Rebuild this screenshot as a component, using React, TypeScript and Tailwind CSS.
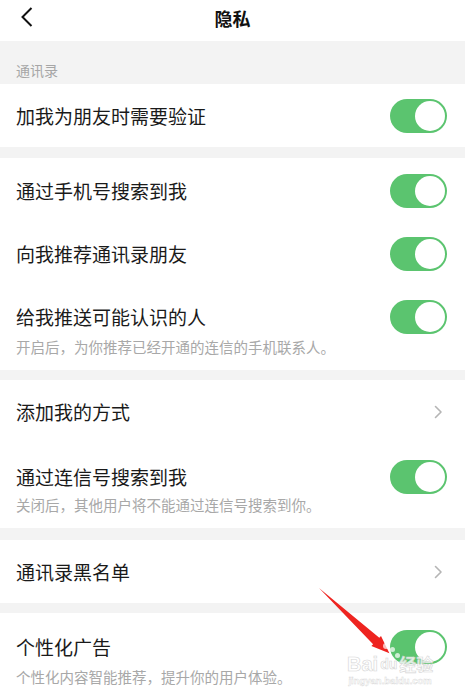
import React from "react";

const FONT = '"Noto Sans CJK SC", "Noto Sans", sans-serif';

function Toggle() {
  return (
    <div className="flex h-[34px] w-[57px] shrink-0 items-center justify-end rounded-full bg-[#5bc46f] p-[2px]">
      <div className="h-[30px] w-[30px] rounded-full bg-white" />
    </div>
  );
}

function Chevron() {
  return (
    <svg width="9" height="14" viewBox="0 0 9 14" className="mr-[4px] shrink-0">
      <polyline points="1.5,1.5 7,7 1.5,12.5" fill="none" stroke="#b5b5b5" strokeWidth="1.6" strokeLinecap="round" strokeLinejoin="round" />
    </svg>
  );
}

function Row({ title, h, right }: { title: string; h: string; right: React.ReactNode }) {
  return (
    <div className={`flex ${h} items-center justify-between bg-white pl-4 pr-[18px]`}>
      <span className="text-[19px] leading-[26px] text-[#1a1a1a]">{title}</span>
      {right}
    </div>
  );
}

function SubRow({ title, sub, pt, pb, mt }: { title: string; sub: string; pt: string; pb: string; mt: string }) {
  return (
    <div className={`flex flex-col bg-white pl-4 pr-[18px] ${pt} ${pb}`}>
      <div className="flex h-[26px] items-center justify-between">
        <span className="text-[19px] leading-[26px] text-[#1a1a1a]">{title}</span>
        <Toggle />
      </div>
      <span className={`text-[14.5px] leading-[20px] text-[#a8a8a8] ${mt}`}>{sub}</span>
    </div>
  );
}

export default function App() {
  return (
    <div className="relative h-[700px] w-[465px] overflow-hidden bg-[#f3f3f3]" style={{ fontFamily: FONT }}>
      {/* header */}
      <div className="h-[41px] bg-white">
        <div className="relative flex h-[35px] items-center justify-center">
          <svg width="12" height="20" viewBox="0 0 12 20" className="absolute left-[21px] top-[7px]">
            <polyline points="10.5,1 1.5,10 10.5,19" fill="none" stroke="#111" strokeWidth="2" strokeLinejoin="miter" />
          </svg>
          <span className="text-[18px] font-bold leading-[24px] text-[#111]">隐私</span>
        </div>
      </div>

      {/* section label */}
      <div className="h-[43px] pl-4 pt-[16px]">
        <span className="text-[14px] leading-[20px] text-[#a6a6a6]">通讯录</span>
      </div>

      <Row title="加我为朋友时需要验证" h="h-[63px]" right={<Toggle />} />

      <div className="h-[11px]" />

      <Row title="通过手机号搜索到我" h="h-[66px]" right={<Toggle />} />
      <Row title="向我推荐通讯录朋友" h="h-[60px]" right={<Toggle />} />
      <SubRow
        title="给我推送可能认识的人"
        sub="开启后，为你推荐已经开通的连信的手机联系人。"
        pt="pt-[20px]"
        pb="pb-[13px]"
        mt="mt-[7px]"
      />

      <div className="h-[10px]" />

      <Row title="添加我的方式" h="h-[64px]" right={<Chevron />} />
      <SubRow
        title="通过连信号搜索到我"
        sub="关闭后，其他用户将不能通过连信号搜索到你。"
        pt="pt-[20px]"
        pb="pb-[13px]"
        mt="mt-[5px]"
      />

      <div className="h-[12px]" />

      <Row title="通讯录黑名单" h="h-[63px]" right={<Chevron />} />

      <div className="h-[10px]" />

      <SubRow
        title="个性化广告"
        sub="个性化内容智能推荐，提升你的用户体验。"
        pt="pt-[21px]"
        pb="pb-[20px]"
        mt="mt-[7px]"
      />

      {/* red arrow annotation */}
      <svg className="pointer-events-none absolute left-0 top-0" width="465" height="700" viewBox="0 0 465 700">
        <polygon
          points="319,588 379.3,637.7 381,635.9 389.4,653.3 371.4,646.1 373.1,644.3"
          fill="#ee2420"
        />
      </svg>

      {/* watermark */}
      <div className="pointer-events-none absolute left-[347px] top-[653px] flex flex-col items-center">
        <div className="flex items-center gap-[1px]">
          <span
            className="text-[20px] font-bold leading-[22px] text-white/80"
            style={{ fontFamily: '"Liberation Sans", sans-serif', WebkitTextStroke: "0.6px #d6d6d6" }}
          >
            Bai
          </span>
          <span
            className="rounded-[3px] px-[1px] text-[14px] font-bold leading-[16px] text-white/80"
            style={{ fontFamily: '"Liberation Sans", sans-serif', WebkitTextStroke: "0.6px #d6d6d6" }}
          >
            du
          </span>
          <span
            className="text-[17px] font-bold leading-[22px] text-white/80"
            style={{ WebkitTextStroke: "0.6px #d6d6d6" }}
          >
            经验
          </span>
        </div>
        <span
          className="text-[9.5px] font-bold leading-[11px] text-white/80"
          style={{ fontFamily: '"Liberation Sans", sans-serif', WebkitTextStroke: "0.4px #d6d6d6" }}
        >
          jingyan.baidu.com
        </span>
      </div>
      <div className="pointer-events-none absolute left-[383px] top-[643px] h-[6px] w-[6px] rounded-full bg-white/70" />
      <div className="pointer-events-none absolute left-[390px] top-[647px] h-[5px] w-[5px] rounded-full bg-white/70" />
      <div className="pointer-events-none absolute left-[395px] top-[653px] h-[5px] w-[5px] rounded-full bg-white/70" />
    </div>
  );
}
